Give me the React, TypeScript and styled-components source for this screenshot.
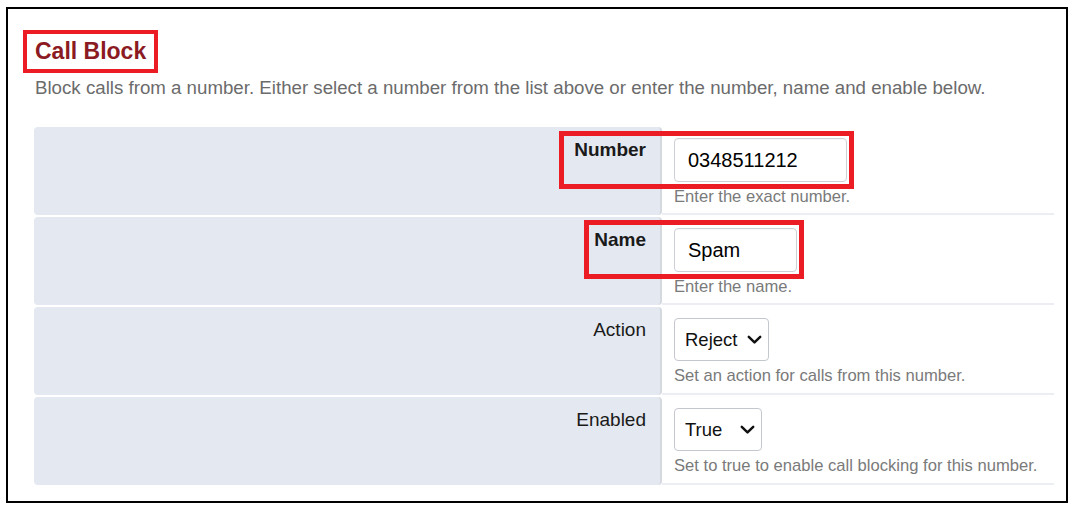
import React from "react";
import styled, { createGlobalStyle } from "styled-components";

const GlobalStyle = createGlobalStyle`
  body {
    margin: 0;
    background: #ffffff;
    font-family: "Liberation Sans", Arial, sans-serif;
  }
`;

type Field = {
  label: string;
  help: string;
  kind: "text" | "select";
  value: string;
  width: number;
  highlight?: { left: number; top: number; width: number; height: number };
};

const fields: Field[] = [
  {
    label: "Number",
    help: "Enter the exact number.",
    kind: "text",
    value: "0348511212",
    width: 173,
    highlight: { left: 525, top: 4, width: 295, height: 58 },
  },
  {
    label: "Name",
    help: "Enter the name.",
    kind: "text",
    value: "Spam",
    width: 123,
    highlight: { left: 550, top: 3, width: 220, height: 59 },
  },
  {
    label: "Action",
    help: "Set an action for calls from this number.",
    kind: "select",
    value: "Reject",
    width: 95,
  },
  {
    label: "Enabled",
    help: "Set to true to enable call blocking for this number.",
    kind: "select",
    value: "True",
    width: 88,
  },
];

const ChevronIcon = () => (
  <svg width="15" height="10" viewBox="0 0 15 10" fill="none">
    <path
      d="M1.8 1.8 L7.5 7.4 L13.2 1.8"
      stroke="currentColor"
      strokeWidth="2.5"
      strokeLinecap="round"
      strokeLinejoin="round"
    />
  </svg>
);

export default function App() {
  return (
    <>
      <GlobalStyle />
      <Frame>
        <TitleBox>
          <Title>Call Block</Title>
        </TitleBox>
        <Description>
          Block calls from a number. Either select a number from the list above
          or enter the number, name and enable below.
        </Description>
        <Table>
          {fields.map((f) => (
            <Row key={f.label}>
              <LabelCell $bold={!!f.highlight}>{f.label}</LabelCell>
              <ValueCell>
                {f.kind === "text" ? (
                  <TextInput
                    style={{ width: f.width }}
                    defaultValue={f.value}
                    readOnly
                  />
                ) : (
                  <SelectWrap style={{ width: f.width }}>
                    <Select defaultValue={f.value}>
                      <option>{f.value}</option>
                    </Select>
                    <Chevron>
                      <ChevronIcon />
                    </Chevron>
                  </SelectWrap>
                )}
                <Help>{f.help}</Help>
              </ValueCell>
              {f.highlight && (
                <Highlight
                  style={{
                    left: f.highlight.left,
                    top: f.highlight.top,
                    width: f.highlight.width,
                    height: f.highlight.height,
                  }}
                />
              )}
            </Row>
          ))}
        </Table>
      </Frame>
    </>
  );
}

const Frame = styled.div`
  box-sizing: border-box;
  margin: 7px 0 0 6px;
  width: 1062px;
  height: 496px;
  border: 2px solid #000;
  padding: 21px 0 0 15px;
`;

const TitleBox = styled.div`
  box-sizing: border-box;
  display: inline-block;
  height: 43px;
  border: 4px solid #ec1c24;
  padding: 3px 8px 0 8px;
`;

const Title = styled.h1`
  margin: 0;
  font-size: 23px;
  line-height: 28px;
  font-weight: bold;
  color: #8b1a22;
`;

const Description = styled.p`
  margin: 4px 0 0 12px;
  font-size: 18.7px;
  line-height: 22px;
  color: #6b6b6b;
`;

const Table = styled.div`
  margin: 28px 0 0 11px;
  width: 1020px;
  display: flex;
  flex-direction: column;
  gap: 2px;
`;

const Row = styled.div`
  position: relative;
  display: grid;
  grid-template-columns: 628px 392px;
  height: 88px;
`;

const LabelCell = styled.div<{ $bold: boolean }>`
  box-sizing: border-box;
  background: #e4e8f0;
  border-radius: 4px;
  border-right: 2px solid #d4d8df;
  text-align: right;
  padding: 12px 14px 0 0;
  font-size: 19px;
  line-height: 22px;
  color: #1a1a1a;
  font-weight: ${(p) => (p.$bold ? "bold" : "normal")};
`;

const ValueCell = styled.div`
  box-sizing: border-box;
  border-bottom: 2px solid #eceef3;
  padding: 11px 0 0 12px;
`;

const TextInput = styled.input`
  box-sizing: border-box;
  display: block;
  height: 44px;
  border: 1px solid #cdd1d7;
  border-radius: 4px;
  padding: 0 0 0 13px;
  font-family: "Liberation Sans", Arial, sans-serif;
  font-size: 20px;
  color: #000;
  background: #fff;
  box-shadow: inset 0 1px 1px rgba(0, 0, 0, 0.04);
  outline: none;
`;

const SelectWrap = styled.div`
  position: relative;
  height: 43px;
`;

const Select = styled.select`
  box-sizing: border-box;
  appearance: none;
  width: 100%;
  height: 43px;
  border: 1px solid #c4c8ce;
  border-radius: 4px;
  padding: 0 0 0 10px;
  font-family: "Liberation Sans", Arial, sans-serif;
  font-size: 18.5px;
  color: #111;
  background: #fff;
`;

const Chevron = styled.span`
  position: absolute;
  right: 7px;
  top: 17px;
  color: #111;
  pointer-events: none;
  display: flex;
`;

const Help = styled.div`
  margin-top: 5px;
  font-size: 16.6px;
  line-height: 19px;
  color: #7a7a7a;
`;

const Highlight = styled.div`
  position: absolute;
  box-sizing: border-box;
  border: 5px solid #ec1c24;
  pointer-events: none;
`;
